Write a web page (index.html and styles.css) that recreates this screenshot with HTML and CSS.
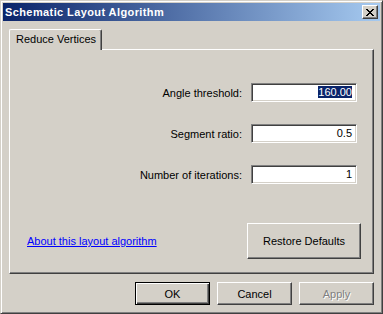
FILE: index.html
```html
<!DOCTYPE html>
<html lang="en">
<head>
  <meta charset="UTF-8" />
  <title>Schematic Layout Algorithm</title>
  <link rel="stylesheet" href="styles.css">
</head>
<body>
  <div class="window">
    <div class="titlebar">
      <span class="title">Schematic Layout Algorithm</span>
      <button class="close-btn" aria-label="Close">
        <svg width="8" height="7" viewBox="0 0 8 7">
          <path d="M0 0h2v1h-2zM6 0h2v1h-2zM1 1h2v1h-2zM5 1h2v1h-2zM2 2h4v1h-4zM3 3h2v1h-2zM2 4h4v1h-4zM1 5h2v1h-2zM5 5h2v1h-2zM0 6h2v1h-2zM6 6h2v1h-2z" fill="#000"/>
        </svg>
      </button>
    </div>

    <div class="content">
      <div class="tabs">
        <div class="tab active">Reduce Vertices</div>
      </div>
      <div class="panel">
        <div class="fields">
          <label for="angle">Angle threshold:</label>
          <div class="field" id="angle"><span class="selected">160.00</span></div>

          <label for="ratio">Segment ratio:</label>
          <div class="field" id="ratio">0.5</div>

          <label for="iter">Number of iterations:</label>
          <div class="field" id="iter">1</div>
        </div>

        <div class="panel-footer">
          <a href="#" class="about-link">About this layout algorithm</a>
          <button class="btn restore">Restore Defaults</button>
        </div>
      </div>

      <div class="dialog-buttons">
        <button class="btn default">OK</button>
        <button class="btn">Cancel</button>
        <button class="btn disabled">Apply</button>
      </div>
    </div>
  </div>
</body>
</html>
```

FILE: styles.css
```css
html, body {
  margin: 0;
  padding: 0;
  background: #d4d0c8;
}

body {
  font-family: "Liberation Sans", Arial, sans-serif;
  font-size: 11px;
  color: #000;
}

.window {
  box-sizing: border-box;
  width: 383px;
  height: 314px;
  background: #d4d0c8;
  border-top: 1px solid #d4d0c8;
  border-left: 1px solid #d4d0c8;
  border-right: 1px solid #404040;
  border-bottom: 1px solid #404040;
  box-shadow: inset 1px 1px #fff, inset -1px -1px #808080;
  padding: 2px;
  display: flex;
  flex-direction: column;
}

.titlebar {
  height: 18px;
  background: linear-gradient(to right, #0a246a, #a6caf0);
  display: flex;
  align-items: center;
  justify-content: space-between;
  padding: 0 2px 0 2px;
}

.title {
  color: #fff;
  font-weight: bold;
  font-size: 11px;
  letter-spacing: 0.4px;
}

.close-btn {
  box-sizing: border-box;
  width: 16px;
  height: 14px;
  padding: 0;
  background: #d4d0c8;
  border: 1px solid;
  border-color: #fff #404040 #404040 #fff;
  box-shadow: inset -1px -1px #808080;
  display: flex;
  align-items: center;
  justify-content: center;
}

.content {
  flex: 1;
  display: flex;
  flex-direction: column;
  padding: 8px 6px 0 6px;
}

.tabs {
  display: flex;
  height: 20px;
}

.tab {
  box-sizing: border-box;
  height: 21px;
  padding: 3px 5px 0 6px;
  border-left: 1px solid #fff;
  border-top: 1px solid #fff;
  border-right: 1px solid #404040;
  border-top-left-radius: 2px;
  border-top-right-radius: 2px;
  box-shadow: inset -1px 0 #808080;
  background: #d4d0c8;
  position: relative;
  z-index: 1;
}

.panel {
  box-sizing: border-box;
  height: 225px;
  border-left: 1px solid #fff;
  border-top: 1px solid #fff;
  border-right: 1px solid #404040;
  border-bottom: 1px solid #404040;
  box-shadow: inset -1px -1px #808080;
  display: flex;
  flex-direction: column;
}

.fields {
  display: grid;
  grid-template-columns: auto 106px;
  justify-content: end;
  align-items: center;
  column-gap: 9px;
  row-gap: 22px;
  padding: 33px 16px 0 0;
}

.fields label {
  text-align: right;
}

.field {
  box-sizing: border-box;
  height: 19px;
  background: #fff;
  border: 1px solid;
  border-color: #808080 #fff #fff #808080;
  box-shadow: inset 1px 1px #404040, inset -1px -1px #d4d0c8;
  text-align: right;
  padding: 2px 4px 0 0;
  line-height: 13px;
}

.selected {
  background: #0a246a;
  color: #fff;
}

.panel-footer {
  margin-top: auto;
  display: flex;
  justify-content: space-between;
  align-items: center;
  padding: 0 12px 14px 17px;
}

.about-link {
  color: #0000ff;
  text-decoration: underline;
}

.btn {
  box-sizing: border-box;
  font-family: inherit;
  font-size: 11px;
  color: #000;
  background: #d4d0c8;
  border: 1px solid;
  border-color: #fff #404040 #404040 #fff;
  box-shadow: inset -1px -1px #808080;
  padding: 0;
  width: 75px;
  height: 23px;
}

.btn.restore {
  width: 114px;
  height: 36px;
}

.btn.default {
  border: 1px solid #000;
  box-shadow: inset 1px 1px #fff, inset -1px -1px #404040, inset -2px -2px #808080;
}

.btn.disabled {
  color: #808080;
  text-shadow: 1px 1px #fff;
}

.dialog-buttons {
  display: flex;
  justify-content: flex-end;
  gap: 7px;
  margin-top: 8px;
}
```
